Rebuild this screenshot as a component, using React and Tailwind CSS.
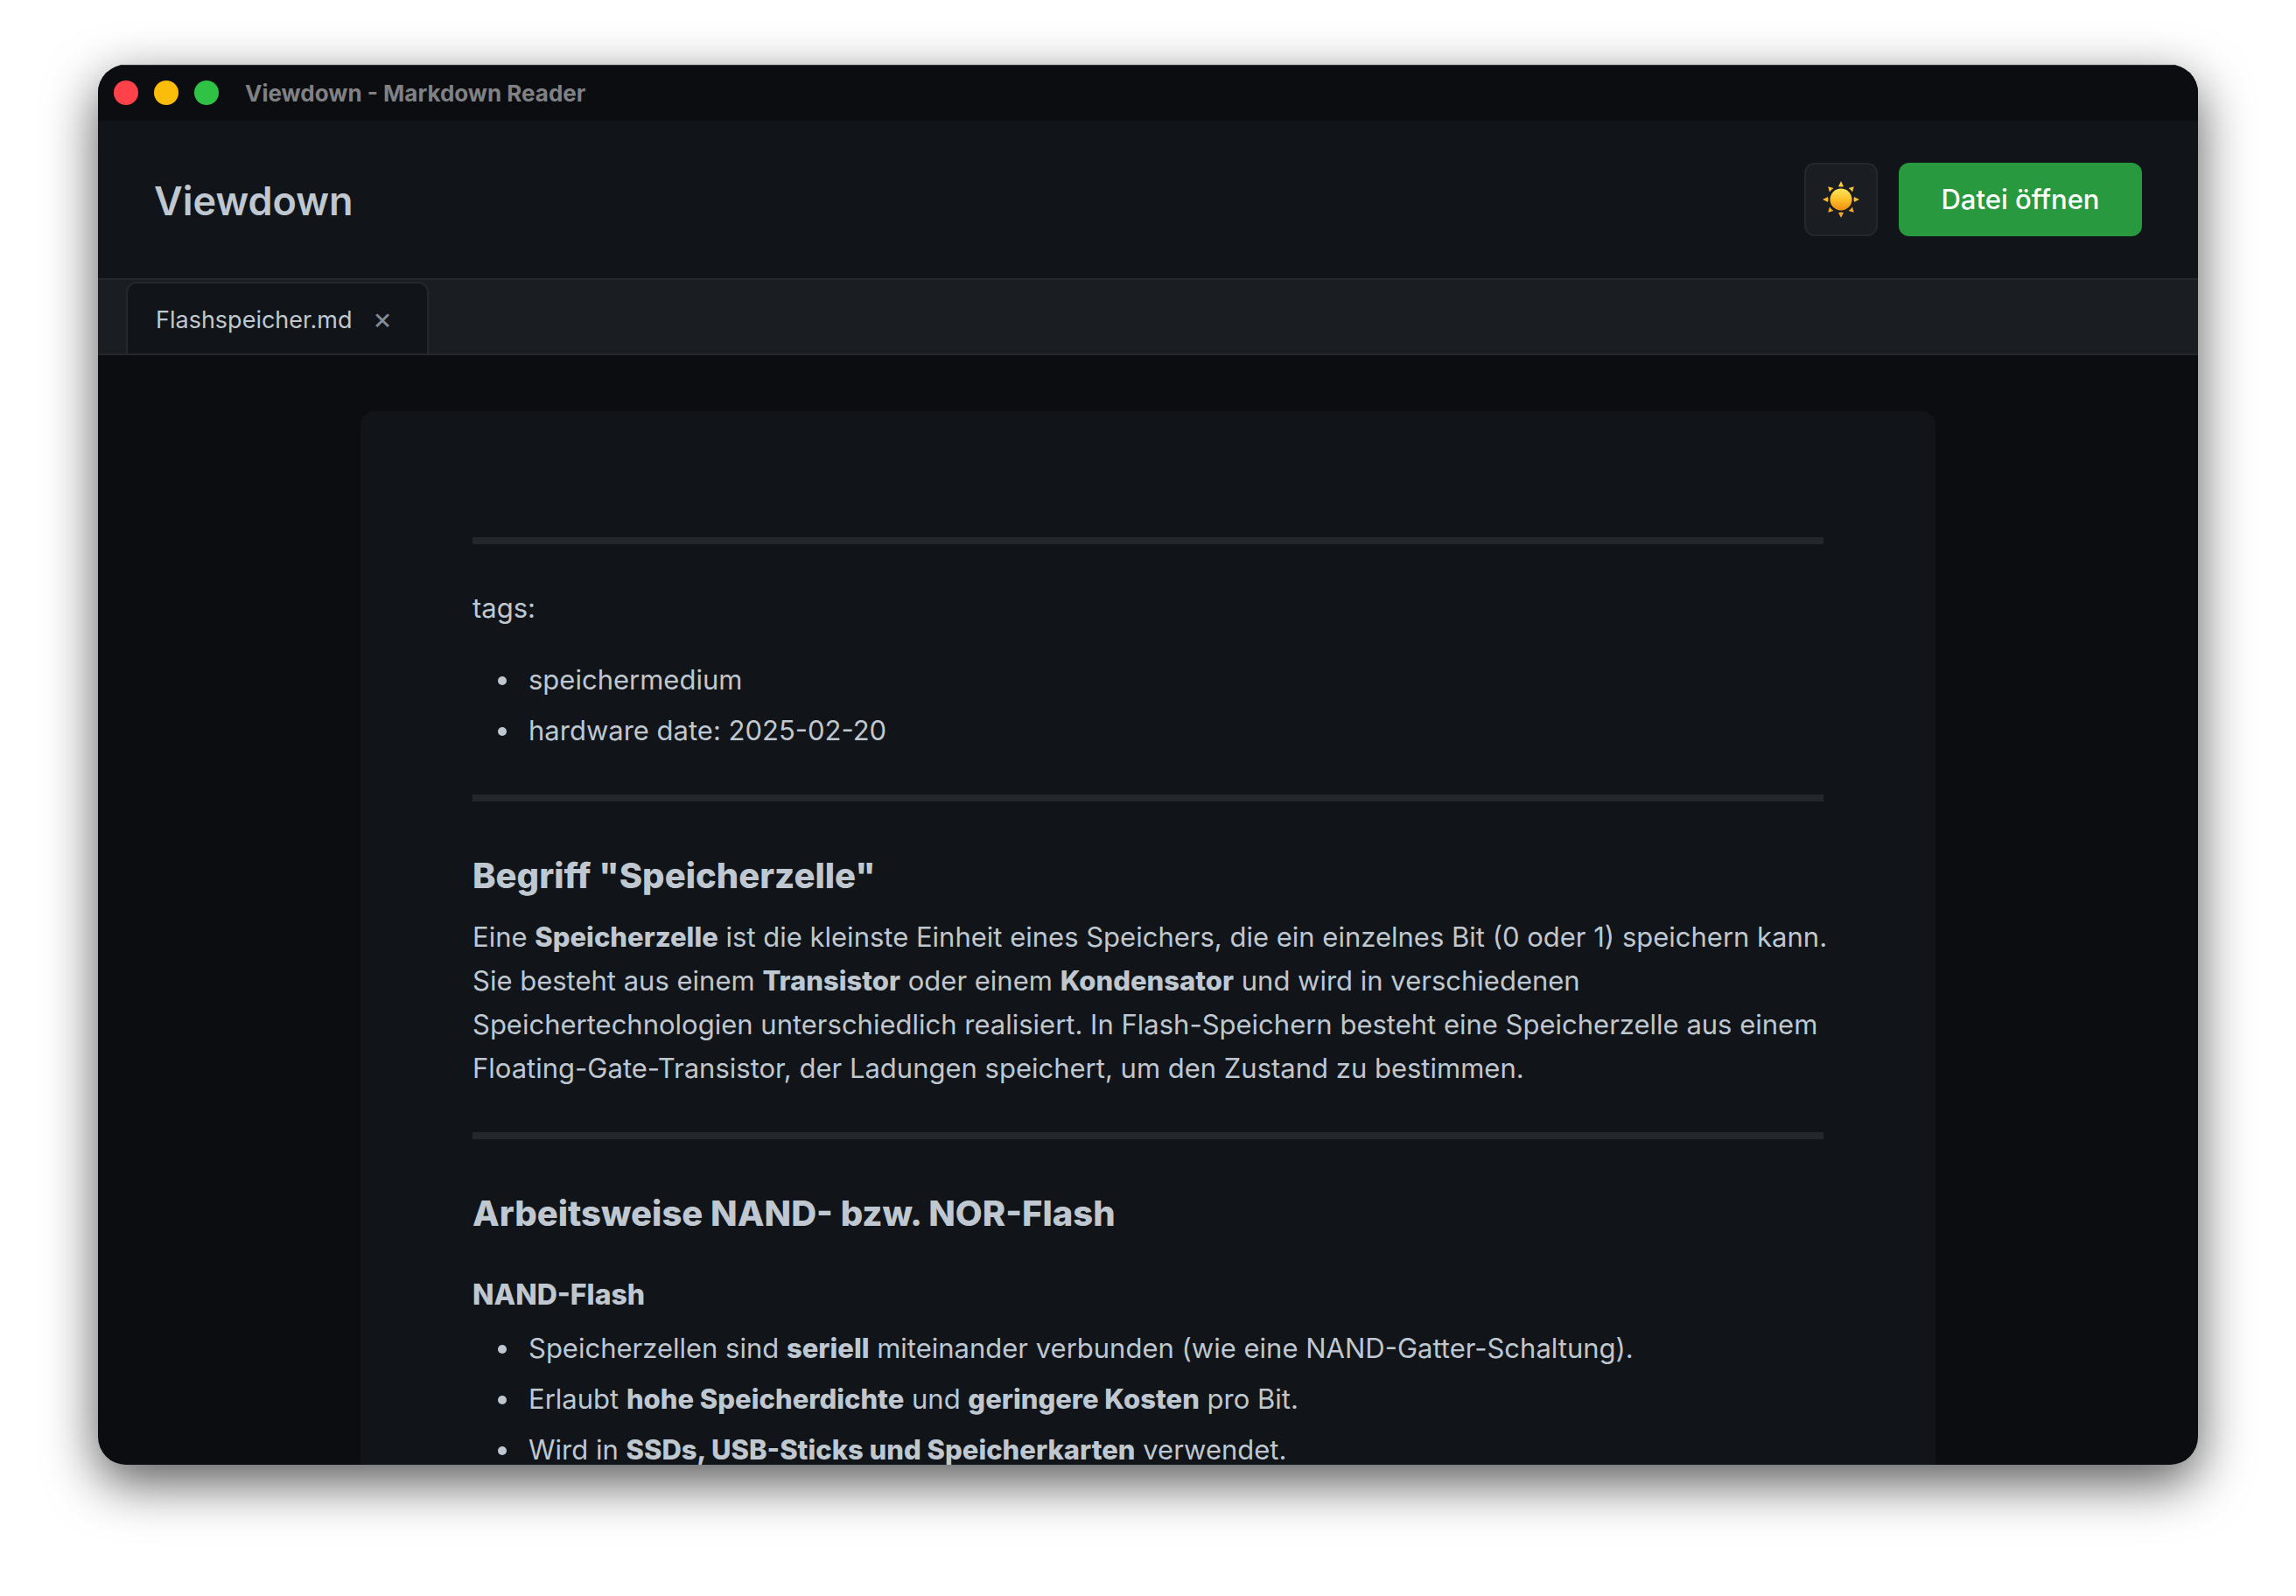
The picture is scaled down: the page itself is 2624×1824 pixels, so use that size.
import React from "react";

function SunIcon() {
  return (
    <svg viewBox="-22 -22 44 44" className="size-11" aria-hidden="true">
      <defs>
        <linearGradient id="sun-disc" x1="0" y1="0" x2="0" y2="1">
          <stop offset="0" stopColor="#ffe45c" />
          <stop offset="0.45" stopColor="#fcc42c" />
          <stop offset="1" stopColor="#ee8d12" />
        </linearGradient>
        <linearGradient id="sun-rays" gradientUnits="userSpaceOnUse" x1="0" y1="-21" x2="0" y2="21">
          <stop offset="0" stopColor="#fbd03a" />
          <stop offset="1" stopColor="#f0a02c" />
        </linearGradient>
      </defs>
      <path
        fill="url(#sun-rays)"
        d="M0-21 3-15Q0-14-3-15ZM0 21-3 15Q0 14 3 15ZM21 0 15 3Q14 0 15-3ZM-21 0-15-3Q-14 0-15 3ZM14.8-14.8 13-8.6Q11.3-11.3 8.6-13ZM14.8 14.8 8.6 13Q11.3 11.3 13 8.6ZM-14.8 14.8-13 8.6Q-11.3 11.3-8.6 13ZM-14.8-14.8-8.6-13Q-11.3-11.3-13-8.6Z"
      />
      <circle r="12.5" fill="url(#sun-disc)" />
    </svg>
  );
}

function TitleBar() {
  return (
    <div className="flex h-16 shrink-0 items-center bg-[#0c0d10] pl-[18px] shadow-[inset_0_1px_0_#303436]">
      <div className="flex gap-[18px]">
        <button type="button" aria-label="Schließen" className="size-7 rounded-full bg-[#ff4149]" />
        <button type="button" aria-label="Minimieren" className="size-7 rounded-full bg-[#fbbd0a]" />
        <button type="button" aria-label="Maximieren" className="size-7 rounded-full bg-[#2fc245]" />
      </div>
      <span className="ml-[30px] text-[26px] font-bold text-[#808184]">Viewdown - Markdown Reader</span>
    </div>
  );
}

function Header() {
  return (
    <header className="flex shrink-0 items-center justify-between border-b-2 border-[#24282c] bg-[#111519] px-16 py-12">
      <h1 className="pt-1 text-[45px] leading-[60px] font-semibold">Viewdown</h1>
      <div className="flex gap-6">
        <button
          type="button"
          aria-label="Helles Design"
          className="flex size-[84px] items-center justify-center rounded-xl border-2 border-[#24282c] bg-[#1a1d21]"
        >
          <SunIcon />
        </button>
        <button type="button" className="h-[84px] w-[278px] rounded-xl bg-[#28993e] text-[31px] font-medium text-white">
          Datei öffnen
        </button>
      </div>
    </header>
  );
}

function TabBar() {
  return (
    <nav className="flex shrink-0 border-b-2 border-[#24282c] bg-[#1a1d21] px-8 pt-[2px]">
      <div className="flex h-[82px] items-center gap-4 rounded-t-xl border-2 border-b-0 border-[#24282c] bg-[#111519] px-8 pt-1">
        <button type="button" className="text-[27px]">
          Flashspeicher.md
        </button>
        <button
          type="button"
          aria-label="Tab schließen"
          className="flex h-9 w-[37px] items-center justify-center pb-1 text-[34px] leading-8 text-[#858c95]"
        >
          ×
        </button>
      </div>
    </nav>
  );
}

function Rule() {
  return <hr className="my-12 h-2 border-0 bg-[#24282c]" />;
}

function BulletList({ children }) {
  return <ul className="list-disc space-y-2 pl-14 *:pl-2">{children}</ul>;
}

function Line({ children }) {
  return <span className="block whitespace-nowrap">{children}</span>;
}

function Strong({ children }) {
  return <strong className="font-extrabold">{children}</strong>;
}

function Document() {
  return (
    <article className="mx-auto max-w-[1800px] rounded-2xl bg-[#111519] px-32 py-24 text-[31px] leading-[50px]">
      <div className="flow-root">
        <Rule />
        <p className="mb-8">tags:</p>
        <BulletList>
          <li>speichermedium</li>
          <li>hardware date: 2025-02-20</li>
        </BulletList>
        <Rule />
        <h2 className="mt-[60px] mb-5 text-[40px] leading-[50px] font-extrabold">Begriff "Speicherzelle"</h2>
        <p>
          <Line>
            Eine <Strong>Speicherzelle</Strong> ist die kleinste Einheit eines Speichers, die ein einzelnes Bit (0 oder
            1) speichern kann.
          </Line>
          <Line>
            Sie besteht aus einem <Strong>Transistor</Strong> oder einem <Strong>Kondensator</Strong> und wird in
            verschiedenen
          </Line>
          <Line>
            Speichertechnologien unterschiedlich realisiert. In Flash-Speichern besteht eine Speicherzelle aus einem
          </Line>
          <Line>Floating-Gate-Transistor, der Ladungen speichert, um den Zustand zu bestimmen.</Line>
        </p>
        <Rule />
        <h2 className="mt-[60px] mb-12 text-[40px] leading-[50px] font-extrabold">Arbeitsweise NAND- bzw. NOR-Flash</h2>
        <h3 className="mb-4 text-[32px] leading-10 font-extrabold">NAND-Flash</h3>
        <BulletList>
          <li>
            Speicherzellen sind <Strong>seriell</Strong> miteinander verbunden (wie eine NAND-Gatter-Schaltung).
          </li>
          <li>
            Erlaubt <Strong>hohe Speicherdichte</Strong> und <Strong>geringere Kosten</Strong> pro Bit.
          </li>
          <li>
            Wird in <Strong>SSDs, USB-Sticks und Speicherkarten</Strong> verwendet.
          </li>
        </BulletList>
      </div>
    </article>
  );
}

export default function App() {
  return (
    <div className="h-screen bg-white px-28 pt-[74px] pb-[150px] font-['Inter',sans-serif] text-[#bfc7d0]">
      <div className="flex h-full flex-col overflow-hidden rounded-[32px] bg-[#0c0d11] shadow-[0_20px_60px_rgba(0,0,0,0.66)]">
        <TitleBar />
        <Header />
        <TabBar />
        <main className="min-h-0 flex-1 overflow-hidden px-16 pt-16">
          <Document />
        </main>
      </div>
    </div>
  );
}
